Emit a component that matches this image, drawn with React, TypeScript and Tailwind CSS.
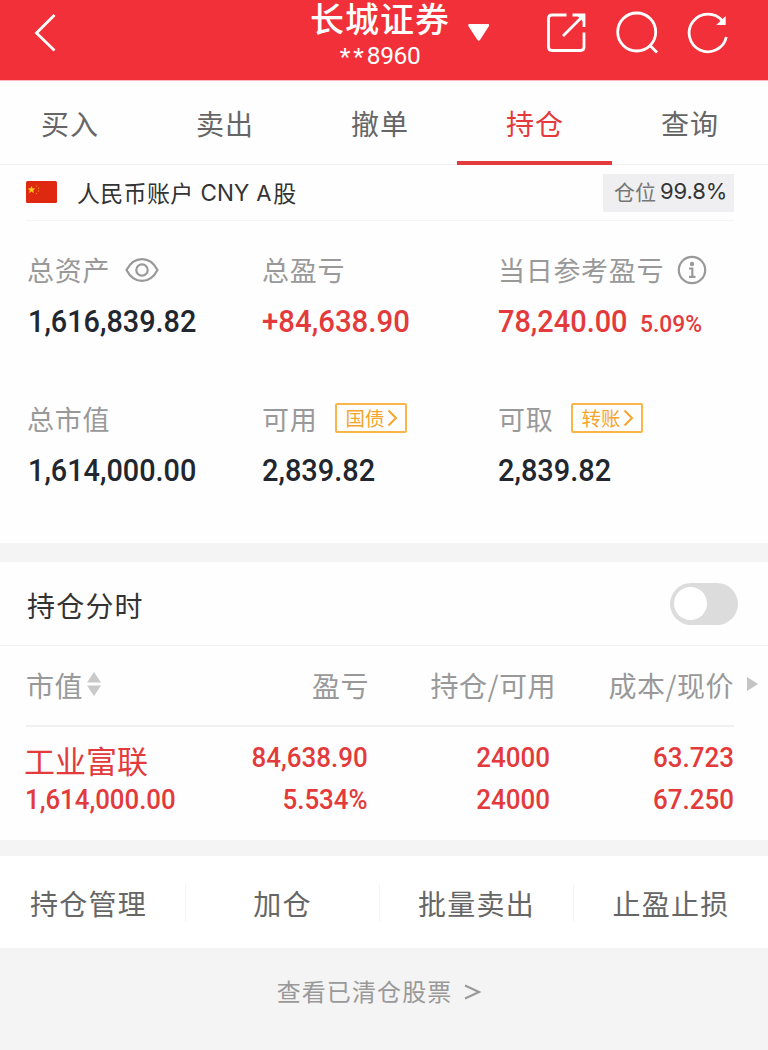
import type { ReactNode } from "react";

const cjk = "font-['Noto_Sans_CJK_SC',sans-serif]";

function Num({ children, className }: { children: ReactNode; className: string }) {
  return (
    <span className={`inline-block whitespace-nowrap font-['Roboto',sans-serif] ${className}`}>
      {children}
    </span>
  );
}

function Header() {
  return (
    <header className="flex h-[81px] border-b border-[#f9b9bc] bg-[#f13039] text-white">
      <div className="w-[300px] pl-[33px] pt-[13px]">
        <svg width="24" height="40" viewBox="0 0 24 40" fill="none" stroke="currentColor" strokeWidth="2.8">
          <path d="M21.500 2 L3.500 20 L21.500 37.500" />
        </svg>
      </div>
      <div className="flex w-[160px] flex-col items-center">
        <div className="h-[35px] text-[34px] font-medium leading-[35px] tracking-[1px]">长城证券</div>
        <div className="flex h-10 items-center pt-0.5">
          <Num className="text-[24.500px] font-normal leading-[40px] tracking-[-0.4px]">
            <span className="relative top-[1px] tracking-[3px]">**</span>8960
          </Num>
        </div>
      </div>
      <div className="w-[85px] pl-[7px] pt-[23px]">
        <svg width="24" height="19" viewBox="0 0 24 19" fill="currentColor">
          <path d="M2 1 H21.500 Q22.500 1.500 22 3 L13 17 Q11.800 18.300 10.500 17 L1.300 3 Q0.800 1.500 2 1Z" />
        </svg>
      </div>
      <div className="flex gap-[28px] pt-[11px]">
        <svg width="42" height="44" viewBox="0 0 42 44" fill="none" stroke="currentColor" strokeWidth="2.800">
          <path d="M21.500 4 H7 Q3.500 4 3.500 7.500 V36 Q3.500 39.500 7 39.500 H35.500 Q39 39.500 39 36 V21.500" />
          <path d="M18 25 L38 5 M27.500 4 H39 V16" />
          <path d="M31.500 4 H39 V11.500Z" fill="currentColor" stroke="none" />
        </svg>
        <svg width="44" height="44" viewBox="0 0 44 44" fill="none" stroke="currentColor" strokeWidth="2.800">
          <circle cx="21.700" cy="21" r="19" />
          <path d="M35 34.500 L42 41.500" />
        </svg>
        <svg width="42" height="44" viewBox="0 0 42 44" fill="none" stroke="currentColor" strokeWidth="2.800">
          <path d="M35.500 10 A18.800 18.800 0 1 0 39.300 26" />
          <path d="M37.800 7 V13 H31.500Z" fill="currentColor" strokeWidth="1.800" />
        </svg>
      </div>
    </header>
  );
}

function Tabs() {
  const tabs = ["买入", "卖出", "撤单", "持仓", "查询"];
  return (
    <nav className="-ml-2 flex h-[84px] w-[776px] border-b border-[#f0f0f1]">
      {tabs.map((t) => (
        <div
          key={t}
          className={`relative w-[155px] pl-px text-center text-[28px] leading-[84px] tracking-[1px] ${
            t === "持仓" ? "text-[#e33a3c]" : "text-[#666]"
          }`}
        >
          {t}
          {t === "持仓" && <span className="absolute -bottom-px left-0 h-[4px] w-full bg-[#e33a3c]" />}
        </div>
      ))}
    </nav>
  );
}

function Account() {
  return (
    <div className="mx-[26px] flex h-14 w-[708px] items-center border-b border-[#f4f4f5]">
      <svg className="-mt-px" width="31" height="22" viewBox="0 0 31 22">
        <rect width="31" height="22" rx="1.500" fill="#de2910" />
        <path d="M5.500 5.500l.9 2.200 2.300.1-1.800 1.500.6 2.300-2-1.300-2 1.300.6-2.300-1.800-1.500 2.300-.1z" fill="#ffc81e" stroke="#ffc81e" strokeWidth=".6" />
        <g fill="#f08a1a">
          <circle cx="10.500" cy="5" r=".7" />
          <circle cx="12.500" cy="7.300" r=".7" />
          <circle cx="12.500" cy="10" r=".7" />
          <circle cx="10.500" cy="12.400" r=".7" />
        </g>
      </svg>
      <div className="-mt-px flex pl-[20px] text-[23px] leading-[30px] text-[#333]">
        <span className="tracking-[0.3px]">人民币账户</span>
        <span className="ml-[7px] pt-px font-['Inter',sans-serif] text-[22.500px]">CNY</span>
        <span className="ml-[7px] pt-px font-['Inter',sans-serif] text-[22px]">A</span>
        <span className="ml-[2px]">股</span>
      </div>
      <div className="ml-auto flex h-[38px] w-[131px] items-center bg-[#efeff1] pb-[3px] pl-[11px] text-[21px] leading-[30px] text-[#777]">
        仓位
        <span className="ml-1 font-['Inter',sans-serif] text-[22px] tracking-[-0.100px] text-[#333]">99.8%</span>
      </div>
    </div>
  );
}

function Tag({ children }: { children: string }) {
  return (
    <span className="flex h-[30px] w-[72px] items-center rounded-[2px] border-2 border-[#f9b44a] pl-[8px] text-[19.500px] leading-[26px] text-[#f5a52e]">
      {children}
      <svg className="ml-[3px]" width="11" height="18" viewBox="0 0 11 18" fill="none" stroke="currentColor" strokeWidth="2">
        <path d="M1.500 1.500 L9 9 L1.500 16.500" />
      </svg>
    </span>
  );
}

function Stat({ label, extra, children }: { label: string; extra?: ReactNode; children: ReactNode }) {
  return (
    <div className="h-[149px]">
      <div className="flex h-10 items-center text-[27px] leading-[40px] tracking-[0.7px] text-[#999]">
        {label}
        {extra}
      </div>
      <div className="mt-[11px] flex h-[42px] items-center">{children}</div>
    </div>
  );
}

const big = "origin-left font-medium text-[31.500px] leading-[42px]";

function Summary() {
  return (
    <section className="grid h-[322px] grid-cols-[235px_236px_1fr] content-start pl-[27px] pt-[29px] text-[#22262e]">
      <Stat
        label="总资产"
        extra={
          <svg className="ml-[15px]" width="34" height="26" viewBox="0 0 34 26" fill="none" stroke="#999" strokeWidth="2.200">
            <path d="M1.500 13 C9 -1.500 25 -1.500 32.500 13 C25 27.500 9 27.500 1.500 13Z" />
            <circle cx="17" cy="13" r="5.700" />
          </svg>
        }
      >
        <Num className={`${big} ml-px scale-x-[0.915]`}>1,616,839.82</Num>
      </Stat>
      <Stat label="总盈亏">
        <Num className={`${big} scale-x-[0.932] text-[#e33a3c]`}>+84,638.90</Num>
      </Stat>
      <Stat
        label="当日参考盈亏"
        extra={
          <svg className="ml-[13px]" width="30" height="30" viewBox="0 0 30 30" fill="none" stroke="#999" strokeWidth="2.200">
            <circle cx="15" cy="15" r="13.200" />
            <circle cx="15" cy="9" r="2.200" fill="#999" stroke="none" />
            <path d="M12 13.500 H15.300 V21.500 M12 21.800 H18.500" />
          </svg>
        }
      >
        <Num className={`${big} w-[142px] scale-x-[0.918] text-[#e33a3c]`}>78,240.00</Num>
        <Num className="origin-left scale-x-[0.95] pt-[5px] text-[24px] font-medium leading-[37px] text-[#e33a3c]">5.09%</Num>
      </Stat>
      <Stat label="总市值">
        <Num className={`${big} ml-px scale-x-[0.915]`}>1,614,000.00</Num>
      </Stat>
      <Stat label="可用" extra={<span className="-mt-0.5 ml-[18px] tracking-normal"><Tag>国债</Tag></span>}>
        <Num className={`${big} scale-x-[0.918]`}>2,839.82</Num>
      </Stat>
      <Stat label="可取" extra={<span className="-mt-0.5 ml-[18px] tracking-normal"><Tag>转账</Tag></span>}>
        <Num className={`${big} scale-x-[0.918]`}>2,839.82</Num>
      </Stat>
    </section>
  );
}

const cell = "origin-right scale-x-[0.91] font-medium text-[28.500px] leading-[42px]";

function Holdings() {
  return (
    <section className="h-[278px]">
      <div className="flex h-[84px] items-center justify-between border-b border-[#f0f0f1] pl-[27px] pr-[30px]">
        <span className="pt-[2px] text-[28px] leading-[40px] tracking-[1.200px] text-[#333]">持仓分时</span>
        <span className="flex h-[42px] w-[68px] items-center rounded-full bg-[#dcdcdc] pl-1">
          <span className="size-[33px] rounded-full bg-white" />
        </span>
      </div>
      <div className="flex h-[79px] items-center pb-px pl-[26px] text-[28px] leading-[40px] tracking-[0.500px] text-[#999]">
        <span className="flex w-[164px] items-center">
          市值
          <svg className="-mt-0.5 ml-[4px]" width="14" height="24" viewBox="0 0 14 24" fill="#c9c9c9">
            <path d="M7 0 L14 10.500 H0Z M0 13.500 H14 L7 24Z" />
          </svg>
        </span>
        <span className="w-[179px] text-right">盈亏</span>
        <span className="w-[187px] text-right">持仓/可用</span>
        <span className="w-[178px] text-right">成本/现价</span>
        <svg className="-mt-0.5 ml-[13px]" width="11" height="16" viewBox="0 0 11 16" fill="#c4c4c4">
          <path d="M0 1 L11 8 L0 15Z" />
        </svg>
      </div>
      <div className="mx-[26px] h-[2px] w-[708px] bg-[#f0f0f1]" />
      <div className="grid grid-cols-[170px_172px_182px_184px] grid-rows-[42px_42px] pl-[26px] pt-[10px] text-right text-[#e33a3c]">
        <span className="-ml-[2px] text-left text-[31px] leading-[45px]">工业富联</span>
        <span><Num className={cell}>84,638.90</Num></span>
        <span><Num className={cell}>24000</Num></span>
        <span><Num className={cell}>63.723</Num></span>
        <span className="-ml-px text-left"><Num className="origin-left scale-x-[0.905] text-[28.500px] font-medium leading-[42px]">1,614,000.00</Num></span>
        <span><Num className={cell}>5.534%</Num></span>
        <span><Num className={cell}>24000</Num></span>
        <span><Num className={cell}>67.250</Num></span>
      </div>
    </section>
  );
}

function Actions() {
  const items = ["持仓管理", "加仓", "批量卖出", "止盈止损"];
  return (
    <div className="-ml-2 flex h-[92px] w-[776px] items-center bg-white pt-px text-[28px] text-[#666]">
      {items.map((t) => (
        <div
          key={t}
          className="h-[38px] w-[194px] border-r border-[#f4f4f4] text-center leading-[38px] tracking-[1.200px] last:border-r-0"
        >
          {t}
        </div>
      ))}
    </div>
  );
}

export default function App() {
  return (
    <div className={`h-[1050px] w-[768px] overflow-hidden bg-[#fefefe] ${cjk}`}>
      <Header />
      <Tabs />
      <Account />
      <Summary />
      <div className="h-[19px] bg-[#f4f4f4]" />
      <Holdings />
      <div className="h-4 bg-[#f4f4f4]" />
      <Actions />
      <footer className="flex h-[102px] justify-center bg-[#f4f4f4] pt-[23px] text-[24px] leading-[40px] tracking-[1.100px] text-[#999]">
        <span>查看已清仓股票</span>
        <svg className="ml-[12px] mr-[10px] mt-[13px]" width="17" height="16" viewBox="0 0 17 16" fill="none" stroke="currentColor" strokeWidth="2">
          <path d="M1 1.500 L15 8 L1 14.500" />
        </svg>
      </footer>
    </div>
  );
}
